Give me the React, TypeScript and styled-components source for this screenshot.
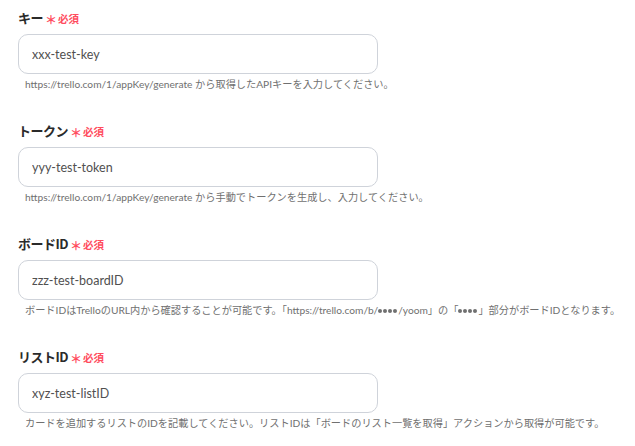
import React from "react";
import styled, { createGlobalStyle } from "styled-components";

const Global = createGlobalStyle`
  html, body { margin: 0; padding: 0; background: #fff; }
  body { font-family: "Noto Sans", "Noto Sans CJK JP", sans-serif; }
`;

const Page = styled.div`
  padding: 7px 18px 0 18px;
  display: flex;
  flex-direction: column;
  gap: 29px;
`;

const Field = styled.div`
  display: flex;
  flex-direction: column;
`;

const LabelRow = styled.div`
  display: flex;
  align-items: center;
  height: 20px;
  gap: 2px;
`;

const Label = styled.span`
  font-family: "Noto Sans CJK JP", sans-serif;
  font-weight: 700;
  font-size: 13px;
  color: #2a2a2a;
  letter-spacing: -0.5px;
`;

const Required = styled.span`
  display: flex;
  align-items: center;
  font-family: "Noto Sans CJK JP", sans-serif;
  font-weight: 700;
  font-size: 10.5px;
  color: #ff4d5e;
  padding-top: 3px;
`;

const Star = styled.span`
  font-size: 12px;
  font-weight: 700;
  margin-right: 1px;
  line-height: 1;
  transform: translateY(1px);
`;

const Input = styled.input`
  margin-top: 7px;
  box-sizing: border-box;
  width: 360px;
  height: 40px;
  border: 1px solid #cfd3da;
  border-radius: 10px;
  padding: 0 13px;
  font-family: "Lato", "Noto Sans CJK JP", sans-serif;
  font-size: 12.5px;
  color: #505050;
  outline: none;
  background: #fff;
`;

const Help = styled.div`
  margin-top: 3px;
  padding-left: 7px;
  font-family: "Lato", "Noto Sans CJK JP", sans-serif;
  font-size: 10.2px;
  line-height: 14px;
  color: #707070;
  white-space: nowrap;
`;

const Dot = styled.span`
  display: inline-block;
  width: 4px;
  height: 4px;
  border-radius: 50%;
  background: #707070;
  margin-right: 1px;
  vertical-align: 1px;
`;

const Dots = () => (
  <>
    <Dot />
    <Dot />
    <Dot />
    <Dot />
  </>
);

const fields: { label: string; value: string; help: React.ReactNode }[] = [
  {
    label: "キー",
    value: "xxx-test-key",
    help: "https://trello.com/1/appKey/generate から取得したAPIキーを入力してください。",
  },
  {
    label: "トークン",
    value: "yyy-test-token",
    help: "https://trello.com/1/appKey/generate から手動でトークンを生成し、入力してください。",
  },
  {
    label: "ボードID",
    value: "zzz-test-boardID",
    help: (
      <>
        ボードIDはTrelloのURL内から確認することが可能です。「https://trello.com/b/
        <Dots />
        /yoom」の「
        <Dots />
        」部分がボードIDとなります。
      </>
    ),
  },
  {
    label: "リストID",
    value: "xyz-test-listID",
    help: "カードを追加するリストのIDを記載してください。リストIDは「ボードのリスト一覧を取得」アクションから取得が可能です。",
  },
];

export default function App() {
  return (
    <>
      <Global />
      <Page>
        {fields.map((f) => (
          <Field key={f.label}>
            <LabelRow>
              <Label>{f.label}</Label>
              <Required>
                <Star>＊</Star>必須
              </Required>
            </LabelRow>
            <Input defaultValue={f.value} readOnly />
            <Help>{f.help}</Help>
          </Field>
        ))}
      </Page>
    </>
  );
}
